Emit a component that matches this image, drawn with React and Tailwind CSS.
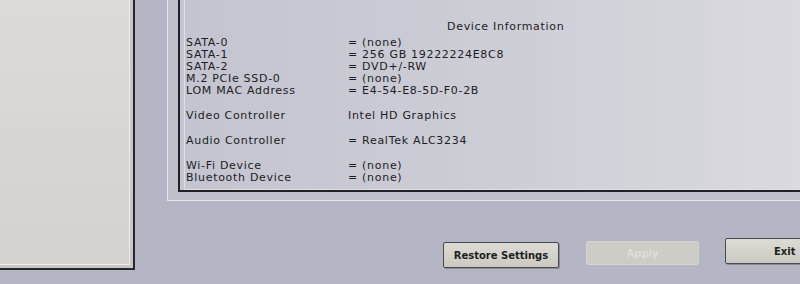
const rows = [
  { label: "SATA-0", value: "= (none)", gap: 0 },
  { label: "SATA-1", value: "= 256 GB 19222224E8C8", gap: 0 },
  { label: "SATA-2", value: "= DVD+/-RW", gap: 0 },
  { label: "M.2 PCIe SSD-0", value: "= (none)", gap: 0 },
  { label: "LOM MAC Address", value: "= E4-54-E8-5D-F0-2B", gap: 0 },
  { label: "Video Controller", value: "Intel HD Graphics", gap: 13 },
  { label: "Audio Controller", value: "= RealTek ALC3234", gap: 13 },
  { label: "Wi-Fi Device", value: "= (none)", gap: 13 },
  { label: "Bluetooth Device", value: "= (none)", gap: 0 },
];

const font = { fontFamily: '"DejaVu Sans", Verdana, sans-serif' };

export default function App() {
  return (
    <div
      className="flex w-[800px] h-[284px] overflow-hidden bg-[#b4b5c5] text-[#1d1d24]"
      style={font}
    >
      {/* left list panel */}
      <div className="w-[135px] h-[270px] shrink-0 bg-[#c8c7c5] border-r-2 border-b-2 border-[#26262c] pr-[3px] pb-[3px]">
        <div className="h-full bg-linear-to-b from-[#dddbd7] to-[#d4d2ce] border-r border-b border-[#efeee9]" />
      </div>

      <div className="ml-[32px] flex flex-col shrink-0">
        {/* device information panel */}
        <div className="w-[640px] h-[201px] bg-[#c0c0cb] border-l border-b border-[#e4e4e8] pl-[10px] pb-[8px]">
          <div className="h-full border-l-2 border-b-2 border-[#202026] bg-linear-to-r from-[#c3c4cf] via-[#cdcdd6] to-[#dadadf] pl-[4px]">
            <div className="h-full border-l border-b border-[#dedee3] pl-[1px] pt-[21px] text-[11px] leading-[12px] tracking-[0.7px]">
              <div className="pl-[261px] pb-[4px]">Device Information</div>
              {rows.map((r) => (
                <div
                  key={r.label}
                  className="flex"
                  style={{ marginTop: r.gap }}
                >
                  <div className="w-[162px] shrink-0">{r.label}</div>
                  <div>{r.value}</div>
                </div>
              ))}
            </div>
          </div>
        </div>

        {/* buttons */}
        <div className="flex items-start mt-[39px] text-[10px] font-bold">
          <button className="ml-[276px] w-[116px] h-[26px] mt-[2px] rounded-[2px] border border-[#4a4a4e] bg-linear-to-b from-[#dcdbd4] to-[#cac9c2] shadow-[1px_1px_0_#8a8a90] text-[#1f1f22]">
            Restore Settings
          </button>
          <button className="ml-[27px] w-[113px] h-[24px] mt-[1px] rounded-[2px] border border-[#d6d4cc] bg-[#cdccc7] text-[#e0ded8]">
            Apply
          </button>
          <button className="ml-[26px] w-[100px] h-[26px] -mt-[2px] rounded-[2px] border border-[#4a4a4e] bg-linear-to-b from-[#dcdbd4] to-[#cac9c2] shadow-[1px_1px_0_#8a8a90] text-[#1f1f22] text-left pl-[48px]">
            Exit
          </button>
        </div>
      </div>
    </div>
  );
}
